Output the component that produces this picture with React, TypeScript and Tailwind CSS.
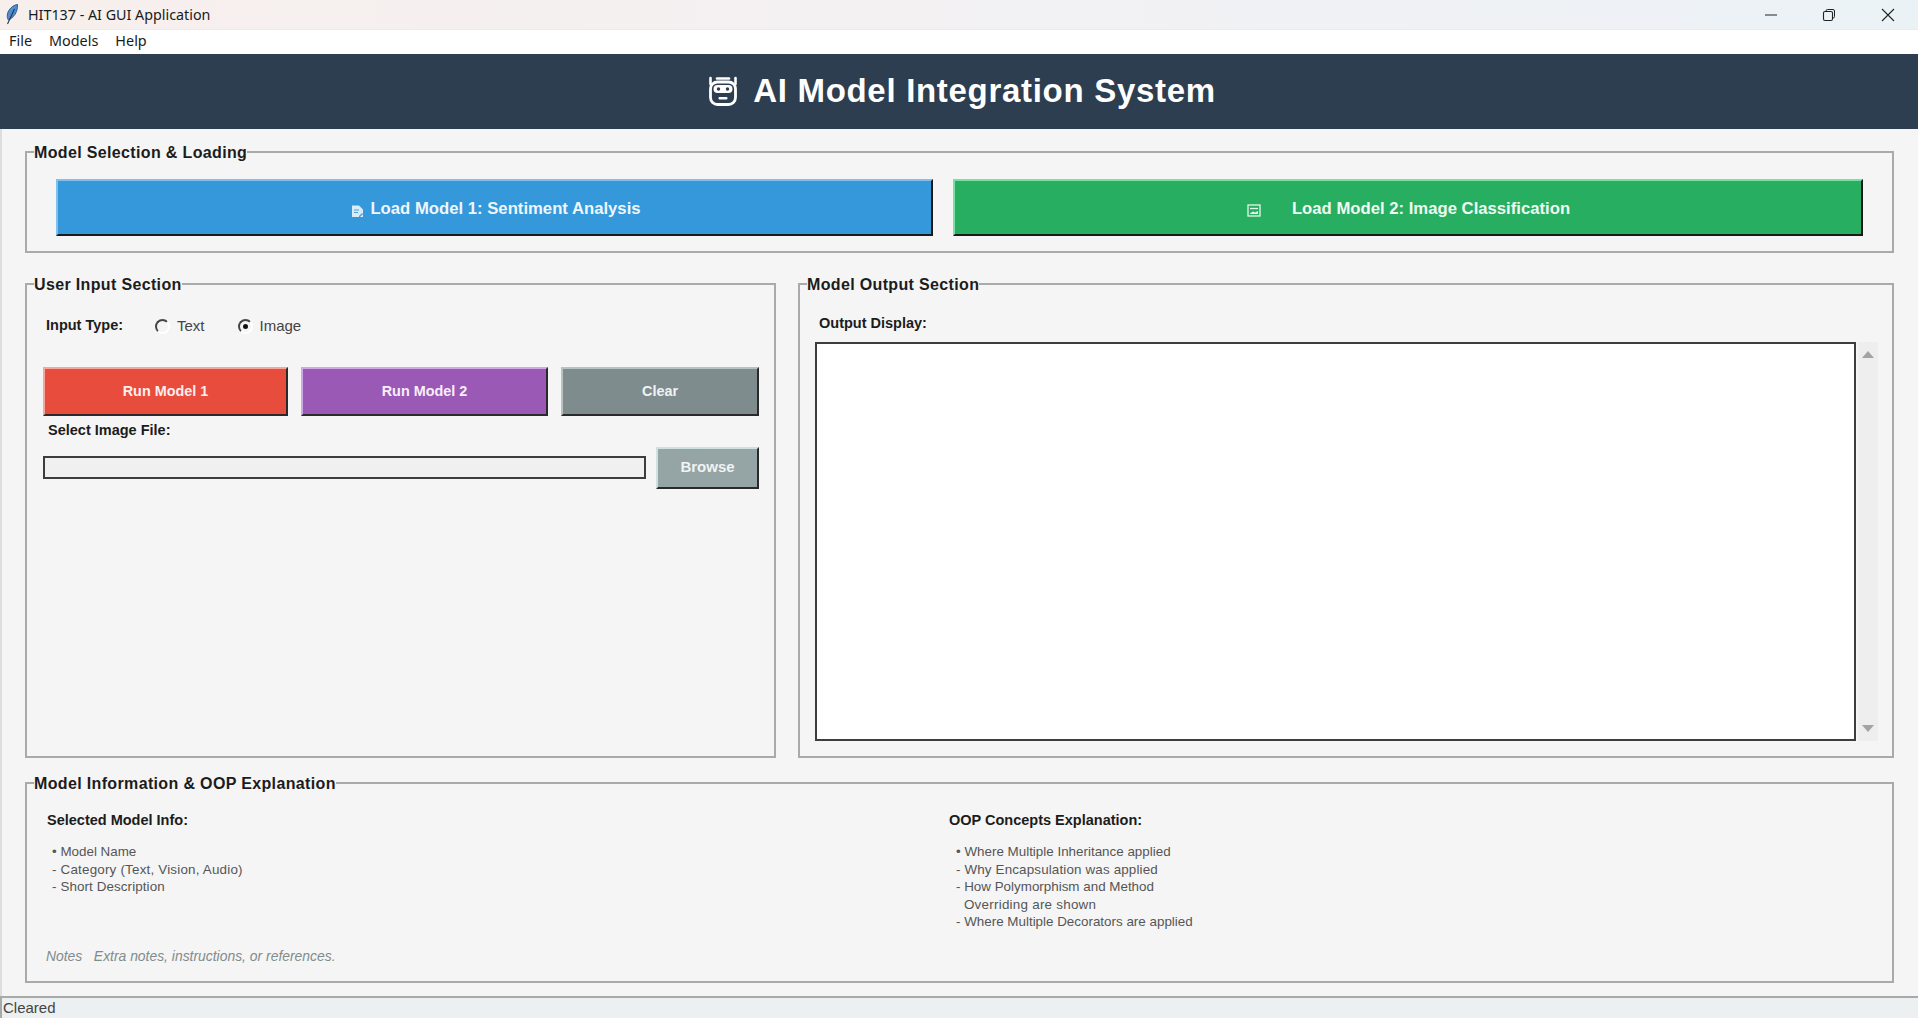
import React from "react";

const sans = "font-['Liberation_Sans',Arial,sans-serif]";
const uiFont = "font-['Noto_Sans','Open_Sans',sans-serif]";

function Feather() {
  return (
    <svg width="14" height="21" viewBox="0 0 14 21" className="shrink-0">
      <path d="M12.500.5C8 1 2.800 5.500 2.300 11c-.2 2 .2 3.500 1 5 3.700-1.500 6.700-4.500 8.200-8.500C12.300 5 12.700 2.500 12.500.5z" fill="#4f8fd0" stroke="#23466f" strokeWidth="0.800" />
      <path d="M9.500 5 2.500 20" fill="none" stroke="#24364d" strokeWidth="1.100" />
    </svg>
  );
}

function WindowControls() {
  return (
    <div className="flex items-center">
      <svg width="14" height="14" viewBox="0 0 14 14" className="mr-[44px]">
        <path d="M1 7h12" stroke="#222" strokeWidth="1" />
      </svg>
      <svg width="14" height="14" viewBox="0 0 14 14" className="mr-[45px]">
        <rect x="1.500" y="3.500" width="9" height="9" rx="1.500" fill="none" stroke="#222" strokeWidth="1.100" />
        <path d="M4 3.500V3a1.500 1.500 0 0 1 1.500-1.500H11A1.500 1.500 0 0 1 12.500 3v5.500A1.500 1.500 0 0 1 11 10h-.5" fill="none" stroke="#222" strokeWidth="1" />
      </svg>
      <svg width="14" height="14" viewBox="0 0 14 14" className="mr-[23px]">
        <path d="M1 1l12 12M13 1L1 13" stroke="#222" strokeWidth="1.100" />
      </svg>
    </div>
  );
}

function BotIcon() {
  return (
    <svg width="32" height="32" viewBox="0 0 32 32" className="shrink-0">
      <path d="M3.500 3v6M28.500 3v6" stroke="#fff" strokeWidth="2.600" strokeLinecap="round" />
      <path d="M10 3.500h12" stroke="#fff" strokeWidth="2.600" strokeLinecap="round" />
      <rect x="3.500" y="7" width="25" height="22.500" rx="7" fill="none" stroke="#fff" strokeWidth="2.800" />
      <rect x="6.500" y="10" width="19" height="8" rx="4" fill="#fff" />
      <circle cx="11.500" cy="14" r="1.700" fill="#2c3e50" />
      <circle cx="20.500" cy="14" r="1.700" fill="#2c3e50" />
      <rect x="11.500" y="22" width="9" height="2.600" rx="1" fill="#fff" />
    </svg>
  );
}

function DocIcon() {
  return (
    <svg width="13" height="14" viewBox="0 0 13 14" className="mt-[4px] shrink-0">
      <path d="M1 1.500h7l4 4v7.500H1z" fill="#d9ecfa" />
      <path d="M3 6h5M3 8.500h4" stroke="#4d9ddb" strokeWidth="1" />
      <path d="M8 12l3-3 1 1-3 3H8z" fill="#4d9ddb" />
    </svg>
  );
}

function ImageIcon() {
  return (
    <svg width="14" height="13" viewBox="0 0 14 13" className="mt-[4px] shrink-0">
      <rect x="1" y="1" width="12" height="11" fill="none" stroke="#e6f7ec" strokeWidth="1.300" />
      <path d="M3 4.500h8" stroke="#e6f7ec" strokeWidth="1.300" />
      <path d="M3 9.500l3-2 2 1 3-1.500V10H3z" fill="#e6f7ec" />
    </svg>
  );
}

function Radio({ checked, label }: { checked?: boolean; label: string }) {
  return (
    <div className="flex items-center">
      <span className="flex h-[15px] w-[15px] items-center justify-center rounded-full border-2 border-t-[#444] border-l-[#444] border-r-white border-b-white bg-[#f5f5f5]">
        {checked && <span className="h-[5px] w-[5px] rounded-full bg-[#111]" />}
      </span>
      <span className="ml-[7px] text-[15px] text-[#444]">{label}</span>
    </div>
  );
}

function Section({ title, className, children }: { title: string; className: string; children: React.ReactNode }) {
  return (
    <fieldset className={`min-w-0 border-2 border-[#aaaaaa] px-0 pb-0 ${className}`}>
      <legend className="ml-[7px] h-[22px] p-0 pt-[1px] text-[16px] font-bold leading-[22px] tracking-[0.35px] text-[#1c1c1c]">{title}</legend>
      {children}
    </fieldset>
  );
}

export default function App() {
  return (
    <div className={`flex h-screen w-full flex-col overflow-hidden bg-[#f5f5f5] ${sans}`}>
      {/* window chrome */}
      <div className={`flex h-[29px] shrink-0 items-center justify-between bg-gradient-to-r from-[#f7efec] via-[#f3f1f3] to-[#ebf2f6] pl-[5px] ${uiFont}`}>
        <div className="flex items-center">
          <Feather />
          <span className="ml-[9px] text-[14.300px] text-[#1a1a1a]">HIT137 - AI GUI Application</span>
        </div>
        <WindowControls />
      </div>
      <div className={`flex h-[25px] shrink-0 items-center gap-[17px] border-t border-[#e8ecee] bg-white pb-[2px] pl-[9px] text-[14.400px] text-[#1a1a1a] ${uiFont}`}>
        <span>File</span>
        <span>Models</span>
        <span>Help</span>
      </div>

      <header className="flex h-[75px] shrink-0 items-center justify-center bg-[#2c3e50] pb-[1px] pl-[5px]">
        <BotIcon />
        <h1 className="ml-[14px] text-[33px] font-bold tracking-[0.7px] text-white">AI Model Integration System</h1>
      </header>

      <main className="flex min-h-0 flex-1 flex-col border-l-2 border-[#dddddd] pl-[23px] pr-[24px]">
        <Section title="Model Selection & Loading" className="mt-[12px] h-[112px]">
          <div className="mt-[16px] flex gap-[20px] pl-[29px]">
            <button className="flex h-[57px] w-[877px] items-center justify-center gap-[6px] border-2 border-t-[#7fc0ef] border-l-[#7fc0ef] border-r-[#1a1a1a] border-b-[#1a1a1a] bg-[#3498db] pl-[3px] pt-[2px] text-[16.700px] font-bold text-[#eef6fc]">
              <DocIcon />
              Load Model 1: Sentiment Analysis
            </button>
            <button className="flex h-[57px] w-[910px] items-center justify-center gap-[31px] border-2 border-t-[#79e0a3] border-l-[#79e0a3] border-r-[#1a1a1a] border-b-[#1a1a1a] bg-[#27ae60] pl-[1px] pt-[2px] text-[16.700px] font-bold text-[#eefaf2]">
              <ImageIcon />
              Load Model 2: Image Classification
            </button>
          </div>
        </Section>

        <div className="mt-[20px] flex gap-[22px]">
          <Section title="User Input Section" className="h-[485px] w-[751px]">
            <div className="mt-[20px] flex items-center pl-[19px]">
              <span className="w-[109px] text-[14.500px] font-bold text-[#1c1c1c]">Input Type:</span>
              <Radio label="Text" />
              <span className="w-[33px]" />
              <Radio checked label="Image" />
            </div>
            <div className="mt-[29px] flex gap-[13px] pl-[16px]">
              <button className="h-[49px] w-[245px] border-2 border-t-[#f5a69d] border-l-[#f5a69d] border-r-[#2a2a2a] border-b-[#2a2a2a] bg-[#e74c3c] pt-[2px] text-[14.400px] font-bold text-[#fdeeee]">Run Model 1</button>
              <button className="h-[49px] w-[247px] border-2 border-t-[#d0a8e6] border-l-[#d0a8e6] border-r-[#2a2a2a] border-b-[#2a2a2a] bg-[#9b59b6] pt-[2px] text-[14.400px] font-bold text-[#f7eefb]">Run Model 2</button>
              <button className="h-[49px] w-[198px] border-2 border-t-[#b8c2c2] border-l-[#b8c2c2] border-r-[#2a2a2a] border-b-[#2a2a2a] bg-[#7f8c8d] pt-[2px] text-[14.400px] font-bold text-[#f0f3f3]">Clear</button>
            </div>
            <p className="mt-[5px] pl-[21px] text-[14.500px] font-bold leading-[18px] text-[#1c1c1c]">Select Image File:</p>
            <div className="mt-[8px] flex items-center gap-[10px] pl-[16px]">
              <div className="h-[23px] w-[603px] border-2 border-[#3d3d3d] bg-[#f0f0f0]" />
              <button className="h-[42px] w-[103px] border-2 border-t-[#cfe0e0] border-l-[#cfe0e0] border-r-[#2a2a2a] border-b-[#2a2a2a] bg-[#95a5a6] text-[15px] font-bold text-[#f0f3f3]">Browse</button>
            </div>
          </Section>

          <Section title="Model Output Section" className="h-[485px] w-[1096px]">
            <p className="mt-[18px] pl-[19px] text-[14.500px] font-bold leading-[20px] text-[#1c1c1c]">Output Display:</p>
            <div className="mt-[9px] flex gap-[2px] pl-[15px]">
              <div className="h-[399px] w-[1041px] border-2 border-[#3d3d3d] bg-white" />
              <div className="flex h-[399px] w-[20px] flex-col items-center justify-between bg-[#eeeeee] py-[9px]">
                <span className="h-0 w-0 border-x-[6px] border-b-[7px] border-x-transparent border-b-[#a3a3a3]" />
                <span className="h-0 w-0 border-x-[6px] border-t-[7px] border-x-transparent border-t-[#a3a3a3]" />
              </div>
            </div>
          </Section>
        </div>

        <Section title="Model Information & OOP Explanation" className="mt-[14px] h-[211px]">
          <div className="flex pl-[20px] pt-[16px]">
            <div className="w-[902px]">
              <p className="text-[14.500px] font-bold leading-[20px] text-[#1c1c1c]">Selected Model Info:</p>
              <div className="mt-[13px] whitespace-pre pl-[5px] text-[13.400px] leading-[17.500px] text-[#555555]">
                <div>• Model Name</div>
                <div className="tracking-[0.2px]">- Category (Text, Vision, Audio)</div>
                <div className="tracking-[0.1px]">- Short Description</div>
              </div>
            </div>
            <div>
              <p className="text-[14.500px] font-bold leading-[20px] text-[#1c1c1c]">OOP Concepts Explanation:</p>
              <div className="mt-[13px] whitespace-pre pl-[7px] text-[13.400px] leading-[17.500px] text-[#555555]">
                <div>• Where Multiple Inheritance applied</div>
                <div className="tracking-[0.15px]">- Why Encapsulation was applied</div>
                <div>- How Polymorphism and Method</div>
                <div className="tracking-[0.25px]">  Overriding are shown</div>
                <div>- Where Multiple Decorators are applied</div>
              </div>
            </div>
          </div>
          <p className="mt-[16px] whitespace-pre pl-[19px] text-[13.900px] italic leading-[18px] text-[#7f8c8d]">Notes   Extra notes, instructions, or references.</p>
        </Section>
      </main>

      <footer className="flex h-[22px] shrink-0 items-center border-t-2 border-l-2 border-[#a8aaaa] bg-[#ecf0f1] pl-[1px] pt-[1px] text-[15px] text-[#444444]">Cleared</footer>
    </div>
  );
}
